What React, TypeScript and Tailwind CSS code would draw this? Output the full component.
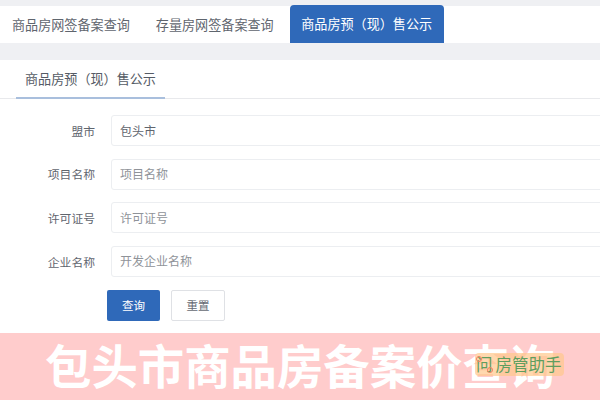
const font = { fontFamily: '"Noto Sans CJK SC", "Liberation Sans", sans-serif' };

function Row({ label, value, placeholder }: { label: string; value?: string; placeholder: string }) {
  return (
    <div className="flex items-center h-[31px]">
      <label className="w-[95px] shrink-0 text-right text-[11.8px] text-[#5f656e]">{label}</label>
      <div className="ml-4 flex-1 h-[31px] min-w-[520px] border border-[#eceef1] rounded-[3px] pl-2 flex items-center text-[12px]">
        {value ? <span className="text-[#5f656e]">{value}</span> : <span className="text-[#8f9399]">{placeholder}</span>}
      </div>
    </div>
  );
}

export default function App() {
  return (
    <div className="relative w-[600px] h-[400px] overflow-hidden bg-[#eff0f3]" style={font}>
      <div className="mt-[6px] h-[37px] bg-white flex text-[13.1px] text-[#5f656e]">
        <div className="ml-3 flex items-center">商品房网签备案查询</div>
        <div className="ml-[26px] flex items-center">存量房网签备案查询</div>
        <div className="ml-[16px] -mt-px h-[38px] w-[154px] bg-[#2f69b9] rounded-t-[4px] text-white flex items-center justify-center">商品房预（现）售公示</div>
      </div>
      <div className="mt-[17px] h-[273px] bg-white">
        <div className="h-[39px] border-b border-[#e8e9ec]">
          <div className="ml-4 w-[149px] h-[39px] border-b-2 border-[#a9bfdd] flex items-center justify-center text-[13.1px] text-[#555b65]">商品房预（现）售公示</div>
        </div>
        <div className="pt-4 flex flex-col gap-[12.67px]">
          <Row label="盟市" value="包头市" placeholder="" />
          <Row label="项目名称" placeholder="项目名称" />
          <Row label="许可证号" placeholder="许可证号" />
          <Row label="企业名称" placeholder="开发企业名称" />
        </div>
        <div className="mt-[13px] ml-[107px] flex gap-[11px] text-[11.5px]">
          <button className="w-[53px] h-[31px] bg-[#2f69b9] rounded-[2px] text-white">查询</button>
          <button className="w-[54px] h-[31px] bg-white border border-[#dfe1e5] rounded-[2px] text-[#666b73]">重置</button>
        </div>
      </div>
      <div className="h-[67px] bg-[#ffcccc] flex items-center pl-[45px] pb-[5px]">
        <span className="text-[46.4px] leading-none font-bold text-white whitespace-nowrap">包头市商品房备案价查询</span>
      </div>
      <div className="absolute left-[475px] top-[353px] w-[89px] h-[23px] rounded-[4px] bg-[#ffc88c]/70 flex items-center pl-[1px] text-[16.5px] leading-none text-[#5f9e5f] whitespace-nowrap">
        <span className="relative mr-[3px]">
          问
          <span className="absolute left-0 top-0 w-[6px] h-[6px] rounded-full border border-[#f47f5f]" />
          <span className="absolute right-0 bottom-0 w-[6px] h-[6px] rounded-full border border-[#f47f5f]" />
        </span>
        <span>房管助手</span>
      </div>
    </div>
  );
}
